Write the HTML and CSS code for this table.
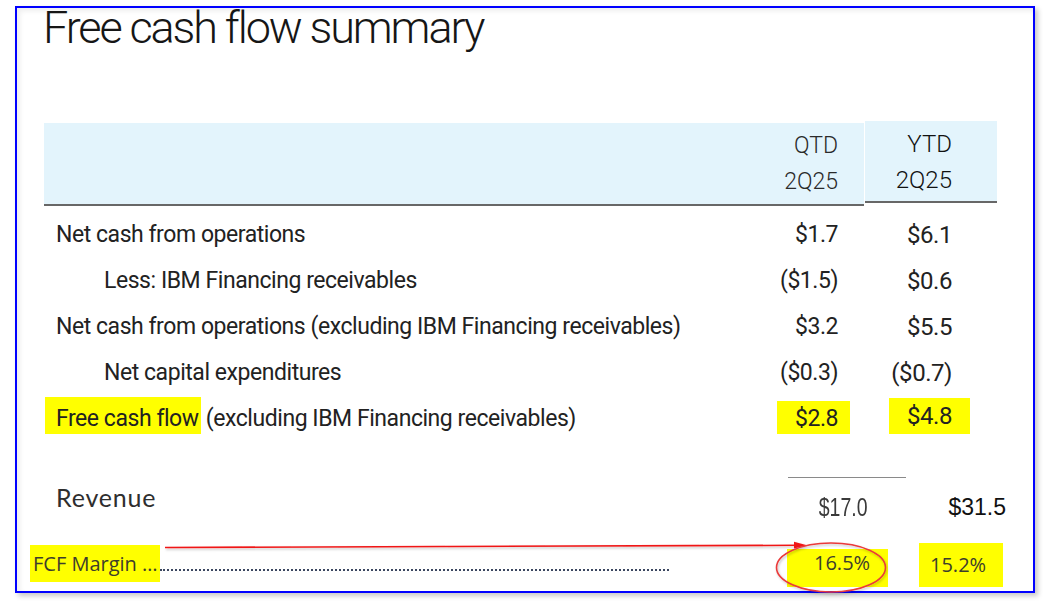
FILE: index.html
```html
<!DOCTYPE html>
<html lang="en">
<head>
<meta charset="utf-8">
<title>Free cash flow summary</title>
<link rel="stylesheet" href="styles.css">
</head>
<body>
<div class="frame">
  <h1 class="title">Free cash flow summary</h1>

  <div class="table">
    <div class="head">
      <div class="head-label"></div>
      <div class="head-qtd">QTD<br>2Q25</div>
      <div class="head-ytd">YTD<br>2Q25</div>
    </div>
    <div class="rows">
      <div class="row">
        <div class="label">Net cash from operations</div>
        <div class="qtd">$1.7</div>
        <div class="ytd"><span class="up">$6.1</span></div>
      </div>
      <div class="row">
        <div class="label indent">Less: IBM Financing receivables</div>
        <div class="qtd">($1.5)</div>
        <div class="ytd"><span class="up">$0.6</span></div>
      </div>
      <div class="row">
        <div class="label">Net cash from operations (excluding IBM Financing receivables)</div>
        <div class="qtd">$3.2</div>
        <div class="ytd"><span class="up">$5.5</span></div>
      </div>
      <div class="row">
        <div class="label indent">Net capital expenditures</div>
        <div class="qtd">($0.3)</div>
        <div class="ytd"><span class="up">($0.7)</span></div>
      </div>
      <div class="row">
        <div class="label"><span class="hl hl-label">Free cash flow</span> (excluding IBM Financing receivables)</div>
        <div class="qtd"><span class="hl hl-q">$2.8</span></div>
        <div class="ytd"><span class="hl hl-y">$4.8</span></div>
      </div>
    </div>
  </div>

  <div class="rev">
    <div class="rev-label">Revenue</div>
    <div class="rev-q"><span class="narrow">$17.0</span></div>
    <div class="rev-y">$31.5</div>
  </div>

  <div class="fcf">
    <div class="fcf-label">FCF Margin …</div>
    <div class="dots"></div>
    <div class="pct pct-q">16.5%</div>
    <div class="pct pct-y">15.2%</div>
  </div>
</div>

<svg class="overlay" width="1061" height="606" viewBox="0 0 1061 606" aria-hidden="true">
  <defs>
    <filter id="sh" x="-10%" y="-50%" width="120%" height="200%">
      <feDropShadow dx="1" dy="1.5" stdDeviation="1" flood-color="#000" flood-opacity="0.25"/>
    </filter>
  </defs>
  <g filter="url(#sh)">
    <line x1="165" y1="547.5" x2="797" y2="545.3" stroke="#f01818" stroke-width="1.6"/>
    <polygon points="794,541.8 807,545.2 794,548.6" fill="#f01818"/>
    <ellipse cx="831" cy="567.5" rx="54.5" ry="24.5" fill="none" stroke="#ea3a3a" stroke-width="1.6"/>
  </g>
</svg>
</body>
</html>
```

FILE: styles.css
```css
html, body {
  margin: 0;
  padding: 0;
  background: #ffffff;
}

body {
  position: relative;
  width: 1061px;
  height: 606px;
  overflow: hidden;
  font-family: Roboto, "Liberation Sans", sans-serif;
  color: #222222;
}

.frame {
  margin: 6px 0 0 15px;
  width: 1020px;
  height: 587px;
  box-sizing: border-box;
  border: 2px solid #0000ff;
  background: #ffffff;
  box-shadow: 3px 3px 5px rgba(0, 0, 0, 0.22), inset 3px 3px 5px rgba(0, 0, 0, 0.07);
}

.title {
  margin: 0 0 75px 0;
  padding-left: 26px;
  font-family: Roboto, sans-serif;
  font-weight: 300;
  font-size: 45px;
  letter-spacing: -2.1px;
  line-height: 40px;
  color: #161616;
}

/* ---------- table ---------- */
.table {
  margin-left: 27px;
  width: 953px;
}

.head {
  display: grid;
  grid-template-columns: 720px 100px 133px;
  align-items: start;
}

.head-label,
.head-qtd {
  height: 81px;
  background: #e3f4fc;
  border-bottom: 2px solid #676767;
}

.head-qtd,
.head-ytd {
  box-sizing: content-box;
  text-align: right;
  font-size: 23px;
  line-height: 36px;
  padding-top: 5px;
  font-weight: 300;
}

.head-qtd {
  height: 76px;
  padding-right: 26px;
  margin-left: -26px;
  color: #2a2a2a;
}

.head-ytd {
  margin-left: 1px;
  margin-top: -2px;
  height: 75px;
  padding-right: 45px;
  background: #e3f4fc;
  border-bottom: 2px solid #676767;
  color: #111111;
  font-size: 24px;
}

.rows {
  padding-top: 6px;
}

.row {
  display: grid;
  grid-template-columns: 720px 100px 133px;
  height: 46px;
  font-size: 23px;
  line-height: 46px;
  letter-spacing: -0.45px;
  white-space: nowrap;
}

.label {
  padding-left: 12px;
}

.label.indent {
  padding-left: 60px;
}

.qtd {
  text-align: right;
  padding-right: 26px;
  margin-left: -26px;
}

.ytd {
  text-align: right;
  padding-right: 45px;
  margin-left: 1px;
  font-size: 24px;
}

.up {
  vertical-align: 2px;
}

.hl {
  display: inline-block;
  background: #ffff00;
  box-sizing: border-box;
}

.hl-label {
  margin-left: -11px;
  padding: 6px 2px 0 11px;
  line-height: 31px;
  height: 37px;
}

.hl-q {
  width: 73px;
  text-align: right;
  margin-right: -12px;
  padding: 2px 12px 0 0;
  line-height: 31px;
  height: 33px;
}

.hl-y {
  width: 81px;
  text-align: right;
  margin-right: -18px;
  padding: 0 18px 0 0;
  line-height: 36px;
  height: 36px;
  vertical-align: 3px;
}

/* ---------- revenue ---------- */
.rev {
  display: flex;
  margin: 35px 0 0 27px;
  height: 66px;
  align-items: flex-start;
}

.rev-label {
  width: 744px;
  box-sizing: border-box;
  padding: 8px 0 0 12px;
  font-family: Lato, "Open Sans", sans-serif;
  font-size: 25px;
  letter-spacing: 0.8px;
  line-height: 24px;
  color: #2e2e2e;
}

.rev-q {
  width: 118px;
  box-sizing: border-box;
  border-top: 1px solid #8a8a8a;
  padding: 17px 38px 0 0;
  text-align: right;
  font-family: "Liberation Sans", sans-serif;
  font-size: 25px;
  line-height: 24px;
  color: #3a3a3a;
}

.narrow {
  display: inline-block;
  transform: scaleX(0.78);
  transform-origin: right center;
  font-weight: 300;
}

.rev-y {
  width: 100px;
  box-sizing: border-box;
  padding-top: 19px;
  text-align: right;
  font-family: "Liberation Sans", Arial, sans-serif;
  font-size: 23px;
  line-height: 23px;
  color: #111;
}

/* ---------- fcf margin ---------- */
.fcf {
  display: flex;
  align-items: flex-start;
  margin-left: 13px;
  font-family: "Open Sans", sans-serif;
  font-size: 20px;
  color: #3d3d2c;
}

.fcf-label {
  margin-top: 2px;
  width: 130px;
  height: 37px;
  box-sizing: border-box;
  padding-left: 3px;
  line-height: 37px;
  background: #ffff00;
  white-space: nowrap;
  overflow: hidden;
}

.dots {
  width: 509px;
  margin-top: 26px;
  border-top: 2px dotted #3c4760;
}

.pct {
  background: #ffff00;
  box-sizing: border-box;
}

.pct-q {
  margin: 6px 0 0 118px;
  width: 101px;
  height: 38px;
  padding-left: 27px;
  line-height: 28px;
}

.pct-y {
  margin: 0 0 0 31px;
  width: 84px;
  height: 44px;
  padding-left: 11px;
  line-height: 44px;
}

.overlay {
  position: absolute;
  left: 0;
  top: 0;
  pointer-events: none;
}
```
